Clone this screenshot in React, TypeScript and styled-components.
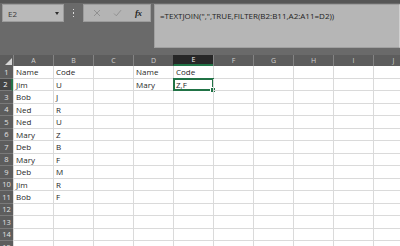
import * as React from "react";
import styled, { createGlobalStyle } from "styled-components";

const GlobalStyle = createGlobalStyle`
    html, body {
        margin: 0;
        padding: 0;
        width: 400px;
        height: 246px;
        overflow: hidden;
        background: #ffffff;
    }
    * {
        box-sizing: border-box;
    }
`;

const Window = styled.div`
    width: 400px;
    height: 246px;
    overflow: hidden;
    font-family: "Open Sans", "Liberation Sans", sans-serif;
    background: #ffffff;
`;

const FormulaBar = styled.div`
    height: 55px;
    background: #6a6a6a;
    border-top: 3px solid #565656;
    display: flex;
    align-items: flex-start;
    padding: 1px 0 0 2px;
`;

const NameBox = styled.div`
    width: 62px;
    height: 18px;
    background: #b9b9b9;
    border: 1px solid #9c9c9c;
    display: flex;
    align-items: center;
    justify-content: space-between;
    padding: 0 4px 0 5px;
    font-size: 8px;
    color: #3a3a3a;
`;

const Arrow = styled.span`
    width: 0;
    height: 0;
    border-left: 2.5px solid transparent;
    border-right: 2.5px solid transparent;
    border-top: 3px solid #2e2e2e;
`;

const Grip = styled.div`
    width: 19px;
    height: 18px;
    display: flex;
    flex-direction: column;
    align-items: center;
    justify-content: center;
    gap: 2px;
`;

const Dot = styled.span`
    width: 1.5px;
    height: 1.5px;
    background: #dcdcdc;
`;

const Buttons = styled.div`
    width: 68px;
    height: 18px;
    background: #b4b4b4;
    border: 1px solid #9c9c9c;
    display: flex;
    align-items: center;
    padding-left: 7px;
    gap: 8px;
    margin-right: 3px;
`;

const IconSlot = styled.span`
    width: 12px;
    height: 12px;
    display: flex;
    align-items: center;
    justify-content: center;
`;

const Fx = styled.span`
    font-family: "Liberation Serif", serif;
    font-style: italic;
    font-weight: bold;
    font-size: 9px;
    color: #262626;
    letter-spacing: -0.5px;
    margin-left: 4px;
`;

const FormulaBox = styled.div`
    flex: 1;
    height: 44px;
    background: #b6b6b6;
    border: 1px solid #a0a0a0;
    border-right-color: #d0d0d0;
    padding: 5px 0 0 5px;
    font-size: 8px;
    color: #1e1e1e;
    white-space: nowrap;
`;

const Sheet = styled.div`
    display: grid;
    grid-template-columns: 13px repeat(10, 40px);
    grid-template-rows: 11px repeat(15, 12.5px);
    width: 413px;
`;

const Corner = styled.div`
    background: #5d5d5d;
    position: relative;
    display: flex;
    align-items: flex-end;
    justify-content: flex-end;
    padding: 0 1px 1px 0;
`;

const ColHead = styled.div<{ $active?: boolean }>`
    background: ${(p) => (p.$active ? "#272727" : "#5d5d5d")};
    color: ${(p) => (p.$active ? "#f0f0f0" : "#cfcfcf")};
    border-left: 1px solid ${(p) => (p.$active ? "#272727" : "#848484")};
    border-bottom: ${(p) => (p.$active ? "2px solid #217346" : "0")};
    font-size: 7px;
    display: flex;
    align-items: center;
    justify-content: center;
`;

const RowHead = styled.div<{ $active?: boolean }>`
    background: ${(p) => (p.$active ? "#444444" : "#5d5d5d")};
    color: ${(p) => (p.$active ? "#ffffff" : "#e2e2e2")};
    border-bottom: 1px solid #7a7a7a;
    border-right: ${(p) => (p.$active ? "2px solid #217346" : "0")};
    font-size: 7.5px;
    display: flex;
    align-items: center;
    justify-content: center;
`;

const Cell = styled.div<{ $selected?: boolean }>`
    position: relative;
    border-left: 1px solid #dadada;
    border-bottom: 1px solid #dadada;
    font-size: 8px;
    color: #1f1f1f;
    padding-left: 2px;
    display: flex;
    align-items: center;
    white-space: nowrap;
    overflow: visible;
    ${(p) =>
        p.$selected &&
        `
        &::before {
            content: "";
            position: absolute;
            left: -1px;
            top: -1px;
            right: -1px;
            bottom: -1px;
            border: 2px solid #217346;
        }
        &::after {
            content: "";
            position: absolute;
            right: -3px;
            bottom: -3px;
            width: 4px;
            height: 4px;
            background: #217346;
            border: 1px solid #ffffff;
        }
    `}
`;

const columns = ["A", "B", "C", "D", "E", "F", "G", "H", "I", "J"];

const data: Record<string, string> = {
    A1: "Name",
    B1: "Code",
    D1: "Name",
    E1: "Code",
    A2: "Jim",
    B2: "U",
    D2: "Mary",
    E2: "Z,F",
    A3: "Bob",
    B3: "J",
    A4: "Ned",
    B4: "R",
    A5: "Ned",
    B5: "U",
    A6: "Mary",
    B6: "Z",
    A7: "Deb",
    B7: "B",
    A8: "Mary",
    B8: "F",
    A9: "Deb",
    B9: "M",
    A10: "Jim",
    B10: "R",
    A11: "Bob",
    B11: "F",
};

const rows = Array.from({ length: 15 }, (_, i) => i + 1);

const App: React.FC = () => {
    return (
        <Window>
            <GlobalStyle />
            <FormulaBar>
                <NameBox>
                    <span>E2</span>
                    <Arrow />
                </NameBox>
                <Grip>
                    <Dot />
                    <Dot />
                    <Dot />
                </Grip>
                <Buttons>
                    <IconSlot>
                        <svg width="8" height="8" viewBox="0 0 8 8">
                            <path
                                d="M1 1L7 7M7 1L1 7"
                                stroke="#8c8c8c"
                                strokeWidth="0.9"
                            />
                        </svg>
                    </IconSlot>
                    <IconSlot>
                        <svg width="9" height="8" viewBox="0 0 9 8">
                            <path
                                d="M1 4.5L3.3 6.8L8 1.2"
                                stroke="#8c8c8c"
                                strokeWidth="0.9"
                                fill="none"
                            />
                        </svg>
                    </IconSlot>
                    <Fx>fx</Fx>
                </Buttons>
                <FormulaBox>=TEXTJOIN(",",TRUE,FILTER(B2:B11,A2:A11=D2))</FormulaBox>
            </FormulaBar>
            <Sheet>
                <Corner>
                    <svg width="7" height="7" viewBox="0 0 7 7">
                        <path d="M7 0L7 7L0 7Z" fill="#d6d6d6" />
                    </svg>
                </Corner>
                {columns.map((c) => (
                    <ColHead key={c} $active={c === "E"}>
                        {c}
                    </ColHead>
                ))}
                {rows.map((r) => (
                    <React.Fragment key={r}>
                        <RowHead $active={r === 2}>{r}</RowHead>
                        {columns.map((c) => (
                            <Cell key={c} $selected={c + r === "E2"}>
                                {data[c + r] || ""}
                            </Cell>
                        ))}
                    </React.Fragment>
                ))}
            </Sheet>
        </Window>
    );
};

export default App;
